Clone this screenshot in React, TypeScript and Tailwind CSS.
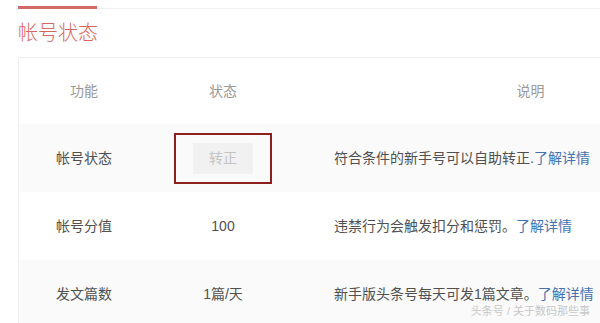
const font = { fontFamily: '"Liberation Sans", "Noto Sans CJK SC", sans-serif' };

type Row = { name: string; status: React.ReactNode; desc: string; bg: string };

function StatusButton() {
  return (
    <div className="flex h-[51px] w-[98px] items-center justify-center border-2 border-[#8e1f1f]">
      <div className="flex h-[31px] w-[60px] items-center justify-center bg-[#f1f1f1] text-[14px] text-[#c4c4c4]">
        转正
      </div>
    </div>
  );
}

const rows: Row[] = [
  { name: "帐号状态", status: <StatusButton />, desc: "符合条件的新手号可以自助转正.", bg: "bg-[#fafafa]" },
  { name: "帐号分值", status: "100", desc: "违禁行为会触发扣分和惩罚。", bg: "bg-white" },
  { name: "发文篇数", status: "1篇/天", desc: "新手版头条号每天可发1篇文章。", bg: "bg-[#fafafa]" },
];

export default function App() {
  return (
    <div className="relative h-[323px] w-[600px] overflow-hidden bg-white" style={font}>
      <div className="flex items-end pt-[6px]">
        <div className="ml-[18px] h-[3px] w-[79px] bg-[#d46a68]" />
        <div className="h-px flex-1 bg-[#efefef]" />
      </div>
      <h1 className="ml-[18px] mt-[13px] text-[20px] font-light leading-[22px] text-[#d8665f]">帐号状态</h1>
      <div className="ml-[18px] mt-[13px] w-[746px] border-l border-t border-[#eeeeee]">
        <div className="flex h-[66px] items-center text-[14px] text-[#999]">
          <div className="w-[130px] text-center">功能</div>
          <div className="w-[148px] text-center">状态</div>
          <div className="flex-1 text-center">说明</div>
        </div>
        {rows.map((r) => (
          <div key={r.name} className={`flex h-[68px] items-center text-[14px] text-[#505050] ${r.bg}`}>
            <div className="w-[130px] text-center">{r.name}</div>
            <div className="flex w-[148px] justify-center">{r.status}</div>
            <div className="flex-1 pl-[37px]">
              {r.desc}
              <span className="text-[#4673b0]">了解详情</span>
            </div>
          </div>
        ))}
      </div>
      <div className="absolute bottom-[4px] right-[10px] text-[11px] text-[#c8c8c8]">头条号 / 关于数码那些事</div>
    </div>
  );
}
